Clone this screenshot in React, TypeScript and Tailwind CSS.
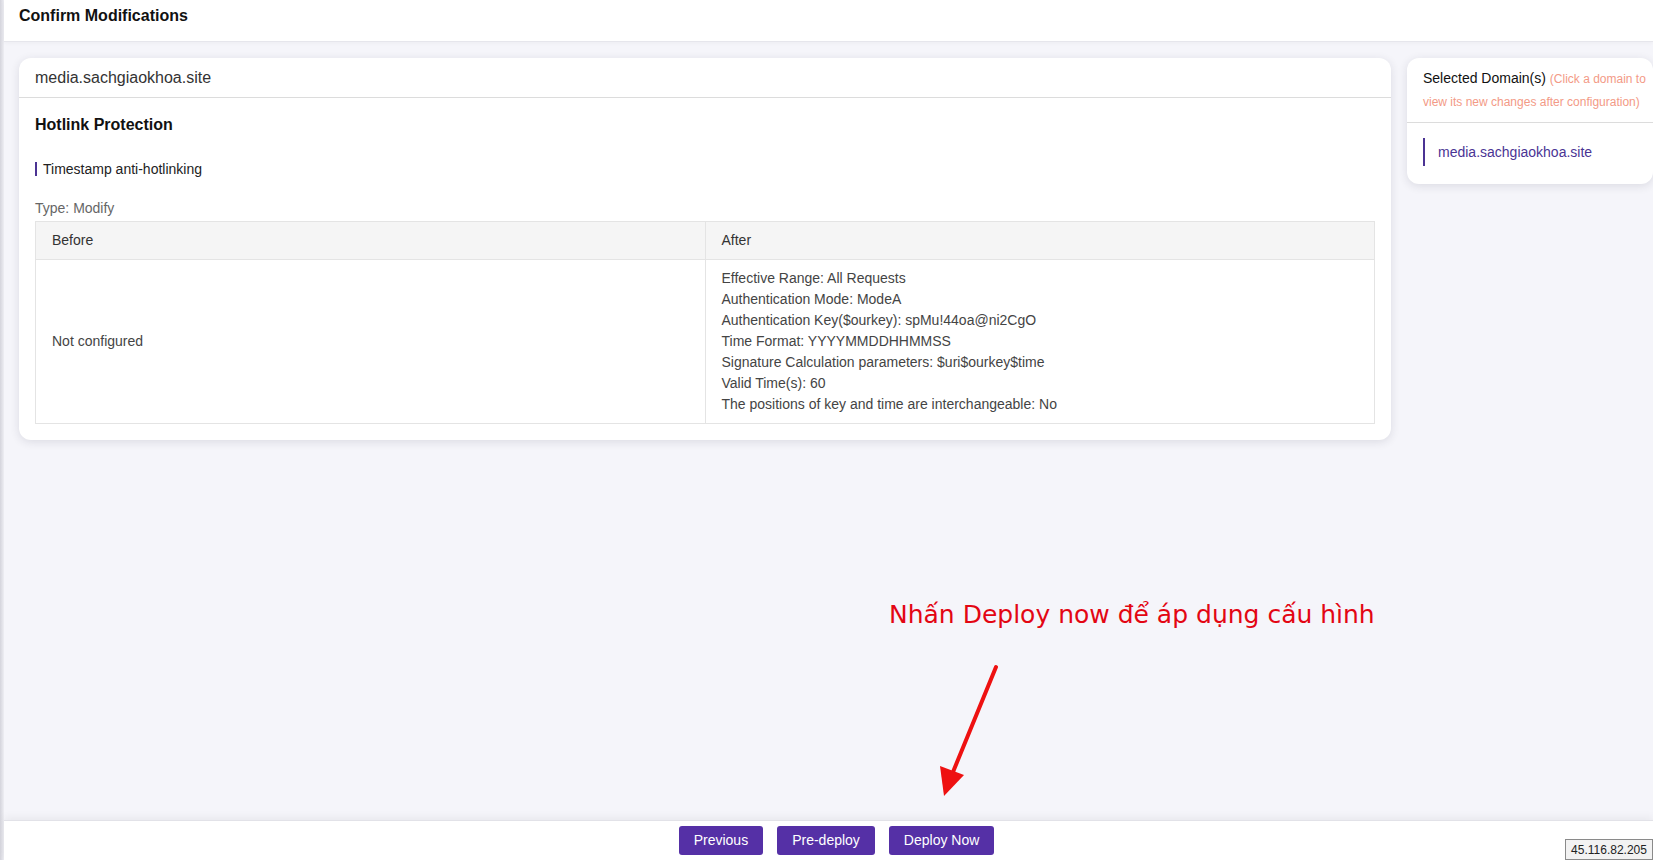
import React from "react";

const afterLines = [
  "Effective Range: All Requests",
  "Authentication Mode: ModeA",
  "Authentication Key($ourkey): spMu!44oa@ni2CgO",
  "Time Format: YYYYMMDDHHMMSS",
  "Signature Calculation parameters: $uri$ourkey$time",
  "Valid Time(s): 60",
  "The positions of key and time are interchangeable: No",
];

const buttons = ["Previous", "Pre-deploy", "Deploy Now"];

function ChangeCard() {
  return (
    <div className="w-[1372px] shrink-0 self-start rounded-[12px] bg-white shadow-[0_2px_10px_rgba(30,30,60,0.12)]">
      <div className="flex h-[40px] items-center border-b border-[#dcdcdc] px-[16px] pt-[1px] text-[16px] text-[#333]">
        media.sachgiaokhoa.site
      </div>
      <div className="px-[16px] pb-[16px] pt-[16px]">
        <h3 className="text-[16px] font-bold leading-[22px] text-[#111]">
          Hotlink Protection
        </h3>
        <div className="mt-[23px] flex h-[20px] items-center">
          <span className="h-[14px] w-[2px] bg-[#4b3393]"></span>
          <span className="ml-[6px] text-[14px] text-[#222]">
            Timestamp anti-hotlinking
          </span>
        </div>
        <div className="mt-[19px] h-[20px] text-[14px] leading-[20px] text-[#666]">
          Type: Modify
        </div>
        <table className="mt-[3px] w-full table-fixed border-collapse border border-[#e4e4e4] text-[14px] text-[#333]">
          <thead>
            <tr className="h-[38px] bg-[#f5f5f5]">
              <th className="border border-[#e4e4e4] px-[16px] text-left font-normal">
                Before
              </th>
              <th className="border border-[#e4e4e4] px-[16px] text-left font-normal">
                After
              </th>
            </tr>
          </thead>
          <tbody>
            <tr>
              <td className="border border-[#e4e4e4] px-[16px] align-middle text-[#444]">
                Not configured
              </td>
              <td className="border border-[#e4e4e4] px-[16px] py-[8px] text-[#444]">
                {afterLines.map((line) => (
                  <div key={line} className="leading-[21px]">
                    {line}
                  </div>
                ))}
              </td>
            </tr>
          </tbody>
        </table>
      </div>
    </div>
  );
}

function DomainPanel() {
  return (
    <div className="w-[246px] shrink-0 self-start rounded-[12px] bg-white shadow-[0_2px_10px_rgba(30,30,60,0.12)]">
      <div className="border-b border-[#dcdcdc] pb-[8px] pl-[16px] pr-[2px] pt-[8px] leading-[23px]">
        <div className="whitespace-nowrap">
          <span className="text-[14px] text-[#111]">Selected Domain(s) </span>
          <span className="text-[12px] text-[#f39a86]">(Click a domain to</span>
        </div>
        <div className="whitespace-nowrap text-[12px] text-[#f39a86]">
          view its new changes after configuration)
        </div>
      </div>
      <div className="px-[16px] pb-[18px] pt-[15px]">
        <div className="flex h-[28px] items-center">
          <span className="h-[28px] w-[2px] bg-[#4b3393]"></span>
          <span className="ml-[13px] text-[14px] text-[#4a3494]">
            media.sachgiaokhoa.site
          </span>
        </div>
      </div>
    </div>
  );
}

function Annotation() {
  return (
    <>
      <div className="absolute left-[889px] top-[599px] whitespace-nowrap font-['DejaVu_Sans',sans-serif] text-[25px] leading-[32px] text-[#e30613]">
        Nhấn Deploy now để áp dụng cấu hình
      </div>
      <svg
        className="absolute left-[930px] top-[660px]"
        width="80"
        height="145"
        viewBox="0 0 80 145"
      >
        <line
          x1="66"
          y1="7"
          x2="23"
          y2="112"
          stroke="#ee1111"
          strokeWidth="4"
          strokeLinecap="round"
        />
        <polygon points="14,136 10,106 34,115" fill="#ee1111" />
      </svg>
    </>
  );
}

export default function App() {
  return (
    <div className="relative flex h-[860px] w-[1653px] overflow-hidden bg-[#f5f5fa] font-['Liberation_Sans',Arial,sans-serif]">
      <div className="w-[4px] shrink-0 bg-gradient-to-r from-[#d4d4dc] to-[#eeeef3]"></div>
      <div className="flex min-w-0 flex-1 flex-col">
        <header className="flex h-[42px] shrink-0 items-start border-b border-[#e6e6ec] bg-white pl-[15px] pt-[6px] shadow-[0_1px_4px_rgba(0,0,0,0.04)]">
          <h1 className="text-[16px] font-bold leading-[20px] text-[#111]">
            Confirm Modifications
          </h1>
        </header>
        <main className="flex flex-1 gap-[16px] pl-[15px] pt-[16px]">
          <ChangeCard />
          <DomainPanel />
        </main>
        <footer className="flex h-[40px] shrink-0 items-center justify-center gap-[14px] border-t border-[#e2e2e8] bg-white pl-[16px] shadow-[0_-3px_8px_rgba(0,0,0,0.05)]">
          {buttons.map((label) => (
            <button
              key={label}
              className="h-[29px] rounded-[3px] bg-[#5530a6] px-[15px] text-[14px] text-white"
            >
              {label}
            </button>
          ))}
        </footer>
      </div>
      <Annotation />
      <div className="absolute bottom-0 left-[1565px] flex h-[21px] w-[88px] items-center justify-center border border-[#8a8a8a] bg-[#f2f2f2] text-[12px] text-[#222]">
        45.116.82.205
      </div>
    </div>
  );
}
